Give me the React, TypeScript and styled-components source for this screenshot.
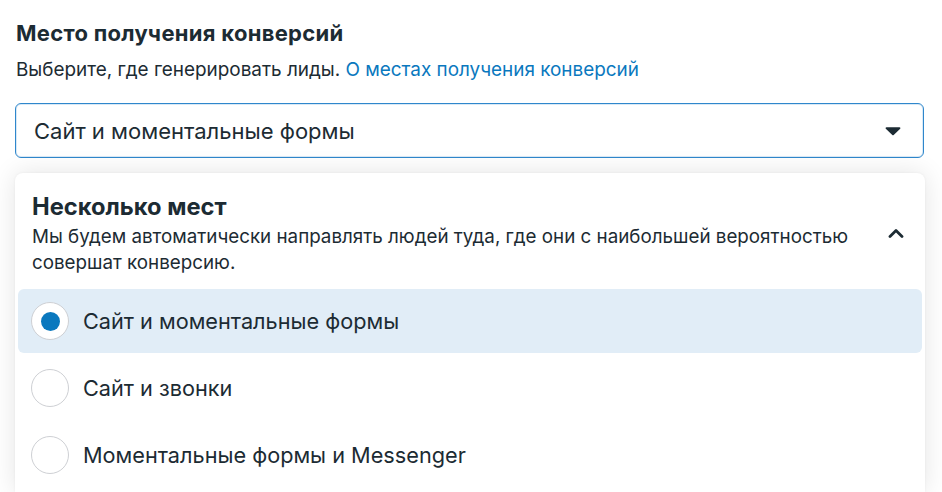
import React from "react";
import styled, { createGlobalStyle } from "styled-components";

const Global = createGlobalStyle`
  html, body { margin: 0; padding: 0; background: #ffffff; }
  body { font-family: Inter, "Noto Sans", "Liberation Sans", sans-serif; color: #1c2b33; -webkit-font-smoothing: antialiased; }
`;

const Page = styled.div`
  width: 942px;
  height: 492px;
  overflow: hidden;
  box-sizing: border-box;
  padding: 19px 18px 0 15px;
  display: flex;
  flex-direction: column;
`;

const Title = styled.h2`
  margin: 0 0 0 1px;
  font-size: 22px;
  line-height: 28px;
  font-weight: 700;
  letter-spacing: 0.3px;
  color: #1c2b33;
`;

const Subtitle = styled.p`
  margin: 11px 0 0 1px;
  font-size: 18.9px;
  line-height: 24px;
  color: #1c2b33;
`;

const Link = styled.a`
  color: #0a78be;
  text-decoration: none;
`;

const Select = styled.div`
  margin-top: 21px;
  height: 55px;
  box-sizing: border-box;
  border: 1px solid #2f87cc;
  box-shadow: inset 0 0 0 1px #d9e9f6;
  border-radius: 6px;
  display: flex;
  align-items: center;
  justify-content: space-between;
  padding: 0 22px 0 18px;
  font-size: 22px;
  color: #1c2b33;
`;

const Card = styled.div`
  margin-top: 15px;
  margin-right: -1px;
  flex: 1;
  background: #ffffff;
  border-radius: 8px 8px 0 0;
  box-shadow: 0 0 26px rgba(0, 0, 0, 0.11), 0 0 3px rgba(0, 0, 0, 0.05);
  padding: 19px 3px 0 3px;
`;

const Header = styled.div`
  display: flex;
  align-items: flex-start;
  padding: 0 18px 0 14px;
`;

const HeaderText = styled.div`
  flex: 1;
  display: flex;
  flex-direction: column;
  padding-right: 30px;
`;

const CardTitle = styled.div`
  font-size: 23.7px;
  line-height: 30px;
  font-weight: 700;
  color: #1c2b33;
`;

const CardDesc = styled.div`
  margin-top: 2px;
  font-size: 18.8px;
  line-height: 26px;
  color: #1c2b33;
`;

const ChevronBox = styled.div`
  margin-top: 36px;
  display: flex;
`;

const Options = styled.div`
  margin-top: 13px;
  display: flex;
  flex-direction: column;
  gap: 3px;
`;

const Option = styled.div<{ $selected?: boolean }>`
  height: 64px;
  display: flex;
  align-items: center;
  gap: 14px;
  padding: 0 13px;
  border-radius: 6px;
  background: ${(p) => (p.$selected ? "#e1edf7" : "transparent")};
  font-size: 21.7px;
  color: #1c2b33;
`;

const Radio = styled.span<{ $checked?: boolean }>`
  width: 38px;
  height: 38px;
  box-sizing: border-box;
  border-radius: 50%;
  border: 1px solid #ced0d4;
  background: #ffffff;
  display: flex;
  align-items: center;
  justify-content: center;
  flex-shrink: 0;
  &::after {
    content: "";
    width: 19px;
    height: 19px;
    border-radius: 50%;
    background: ${(p) => (p.$checked ? "#0a78be" : "transparent")};
  }
`;

const Caret = () => (
  <svg width="16" height="10" viewBox="0 0 16 10">
    <path d="M1.5 1.2h13c.8 0 1.2.9.7 1.5L8.7 8.9a1 1 0 0 1-1.4 0L.8 2.7c-.5-.6-.1-1.5.7-1.5z" fill="#1c2b33" />
  </svg>
);

const ChevronUp = () => (
  <svg width="16" height="10" viewBox="0 0 16 10">
    <path d="M2 8.5L8 2.5l6 6" fill="none" stroke="#1c2b33" strokeWidth="2.8" strokeLinecap="round" strokeLinejoin="round" />
  </svg>
);

export default function App() {
  const options = [
    { label: "Сайт и моментальные формы", selected: true },
    { label: "Сайт и звонки", selected: false },
    { label: "Моментальные формы и Messenger", selected: false },
  ];
  return (
    <>
      <Global />
      <Page>
        <Title>Место получения конверсий</Title>
        <Subtitle>
          Выберите, где генерировать лиды. <Link href="#">О местах получения конверсий</Link>
        </Subtitle>
        <Select>
          <span>Сайт и моментальные формы</span>
          <Caret />
        </Select>
        <Card>
          <Header>
            <HeaderText>
              <CardTitle>Несколько мест</CardTitle>
              <CardDesc>
                Мы будем автоматически направлять людей туда, где они с наибольшей вероятностью совершат конверсию.
              </CardDesc>
            </HeaderText>
            <ChevronBox>
              <ChevronUp />
            </ChevronBox>
          </Header>
          <Options>
            {options.map((o) => (
              <Option key={o.label} $selected={o.selected}>
                <Radio $checked={o.selected} />
                <span>{o.label}</span>
              </Option>
            ))}
          </Options>
        </Card>
      </Page>
    </>
  );
}
